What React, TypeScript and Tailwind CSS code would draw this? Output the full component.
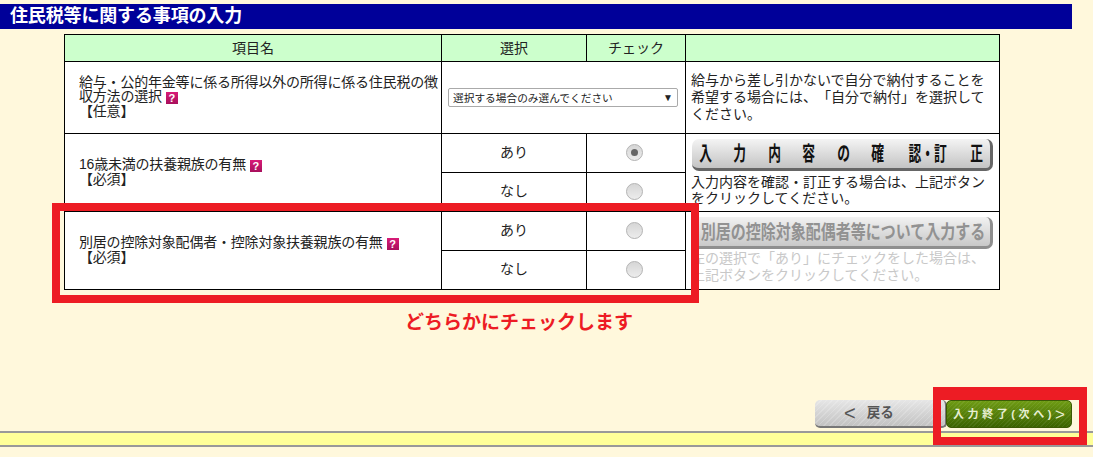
const jp = "font-['Liberation_Sans','Noto_Sans_CJK_JP',sans-serif]";

function Help() {
  return (
    <span className="ml-[4px] inline-flex h-[12px] w-[12px] items-center justify-center bg-gradient-to-b from-[#d81b78] to-[#a80f5c] align-[-1px] font-['Liberation_Sans',sans-serif] text-[11px] leading-none font-bold tracking-normal text-white">
      ?
    </span>
  );
}

function Radio({ checked }: { checked?: boolean }) {
  return (
    <span className="mr-[3px] inline-flex h-[17px] w-[17px] items-center justify-center rounded-full border border-[#b5b5b5] bg-gradient-to-b from-[#d6d6d6] to-[#ececec] align-middle">
      {checked && <span className="h-[7px] w-[7px] rounded-full bg-[#666]" />}
    </span>
  );
}

function ImageButton({ children, disabled }: { children: React.ReactNode; disabled?: boolean }) {
  return (
    <div
      className={
        disabled
          ? "flex h-[32px] w-[301px] items-center justify-center rounded-[7px] border-r-[3px] border-b-[3px] border-[#8f8f8f] bg-gradient-to-b from-[#f2f2f2] to-[#c9c9c9] pr-[2px] pl-[6px] text-[#929292]"
          : "flex h-[32px] w-[301px] items-center justify-between rounded-[7px] border-r-[3px] border-b-[3px] border-[#666] bg-gradient-to-b from-[#f4f4f4] to-[#c4c4c4] px-[6px] text-[#111]"
      }
    >
      {children}
    </div>
  );
}

export default function App() {
  const cell = "border border-black";
  const nameCell = `${cell} pb-[2px] pl-[14px] tracking-[-0.2px]`;
  const choice = `${cell} pb-[2px] text-center`;
  const glyph = "origin-center scale-x-[0.85] scale-y-[1.35] text-[15px] font-bold whitespace-nowrap";

  return (
    <div className={`relative flex h-[457px] w-full flex-col overflow-hidden bg-[#fff8dc] text-[14px] leading-[14px] text-[#222] [text-spacing-trim:space-all] ${jp}`}>
      <div className="mt-[4px] flex h-[25px] w-[1072px] items-center bg-[#000099] pb-[1px] pl-[10px] text-[18px] font-bold tracking-[-0.15px] text-white">
        住民税等に関する事項の入力
      </div>

      <table className="mt-[5px] ml-[64px] w-[936px] table-fixed border-collapse bg-white">
        <colgroup>
          <col className="w-[377px]" />
          <col className="w-[145px]" />
          <col className="w-[99px]" />
          <col />
        </colgroup>
        <thead>
          <tr className="h-[27px] bg-[#ccffcc] text-center">
            <th className={`${cell} font-normal`}>項目名</th>
            <th className={`${cell} font-normal`}>選択</th>
            <th className={`${cell} font-normal`}>チェック</th>
            <th className={cell}></th>
          </tr>
        </thead>
        <tbody>
          <tr className="h-[72px]">
            <td className={nameCell}>
              <span className="whitespace-nowrap">給与・公的年金等に係る所得以外の所得に係る住民税の徴</span>
              <br />
              収方法の選択
              <Help />
              <div>【任意】</div>
            </td>
            <td colSpan={2} className={`${cell} px-[6px]`}>
              <div className="relative h-[19px] w-[230px]">
                <select className="h-[19px] w-full appearance-none rounded-[2px] border border-[#aaa] bg-white pl-[4px] text-[10.7px] text-[#222]">
                  <option>選択する場合のみ選んでください</option>
                </select>
                <span className="absolute top-[3px] right-[5px] text-[10px] text-[#222]">▼</span>
              </div>
            </td>
            <td className={`${cell} pr-[8px] pl-[5px] leading-[17px]`}>
              給与から差し引かないで自分で納付することを希望する場合には、「自分で納付」を選択してください。
            </td>
          </tr>

          <tr className="h-[39px]">
            <td rowSpan={2} className={nameCell}>
              16歳未満の扶養親族の有無
              <Help />
              <div>【必須】</div>
            </td>
            <td className={choice}>あり</td>
            <td className={choice}>
              <Radio checked />
            </td>
            <td rowSpan={2} className={`${cell} pr-[8px] pl-[5px] align-top leading-[16px]`}>
              <div className="mt-[5px] mb-[3px] ml-[1px]">
                <ImageButton>
                  {["入", "力", "内", "容", "の", "確"].map((c) => (
                    <span key={c} className={glyph}>
                      {c}
                    </span>
                  ))}
                  <span className={glyph}>認・訂</span>
                  <span className={glyph}>正</span>
                </ImageButton>
              </div>
              入力内容を確認・訂正する場合は、上記ボタンをクリックしてください。
            </td>
          </tr>
          <tr className="h-[39px]">
            <td className={choice}>なし</td>
            <td className={choice}>
              <Radio />
            </td>
          </tr>

          <tr className="h-[39px]">
            <td rowSpan={2} className={nameCell}>
              別居の控除対象配偶者・控除対象扶養親族の有無
              <Help />
              <div>【必須】</div>
            </td>
            <td className={choice}>あり</td>
            <td className={choice}>
              <Radio />
            </td>
            <td rowSpan={2} className={`${cell} pr-[8px] pl-[5px] align-top leading-[17px] text-[#c8c8c8]`}>
              <div className="mt-[5px] mb-[1px] ml-[1px]">
                <ImageButton disabled>
                  <span className="origin-center scale-y-[1.3] text-[15px] font-semibold whitespace-nowrap">
                    別居の控除対象配偶者等について入力する
                  </span>
                </ImageButton>
              </div>
              左の選択で「あり」にチェックをした場合は、上記ボタンをクリックしてください。
            </td>
          </tr>
          <tr className="h-[39px]">
            <td className={choice}>なし</td>
            <td className={choice}>
              <Radio />
            </td>
          </tr>
        </tbody>
      </table>

      <div className="mt-[23px] ml-[405px] text-[19px] leading-[20px] font-bold text-[#ed1c24]">
        どちらかにチェックします
      </div>

      <div className="mt-[67px] flex h-[28px] pl-[815px]">
        <div className="flex h-[28px] w-[132px] items-center rounded-[5px] border-r-2 border-b-2 border-[#777] bg-[repeating-linear-gradient(135deg,rgba(255,255,255,0.18)_0_1px,transparent_1px_4px),linear-gradient(#e6e6e6,#c2c2c2)] pl-[29px] text-[13.5px] font-bold text-[#555]">
          <span className="mr-[11px] text-[20px] font-normal">&lt;</span>
          戻る
        </div>
        <div className="-ml-[1px] flex h-[28px] w-[126px] items-center justify-center rounded-[5px] border border-[#3c5a05] bg-[repeating-linear-gradient(135deg,rgba(255,255,255,0.07)_0_1px,transparent_1px_3px),linear-gradient(#6f9c14,#3b6300)] text-[11px] font-semibold tracking-[3.6px] whitespace-nowrap text-[#e8efd2]">
          入力終了(次へ)<span className="text-[17px] leading-none font-normal tracking-normal">&gt;</span>
        </div>
      </div>

      <div className="mt-[3px] h-[16px] border-y-2 border-[#999] bg-[#ffff99]" />

      {/* red annotation frames */}
      <div className="absolute top-[203px] left-[52px] h-[100px] w-[647px] border-[8px] border-[#ed1c24]" />
      <div className="absolute top-[387px] left-[933px] h-[58px] w-[154px] border-x-[8px] border-t-[13px] border-b-[8px] border-[#ed1c24]" />
    </div>
  );
}
